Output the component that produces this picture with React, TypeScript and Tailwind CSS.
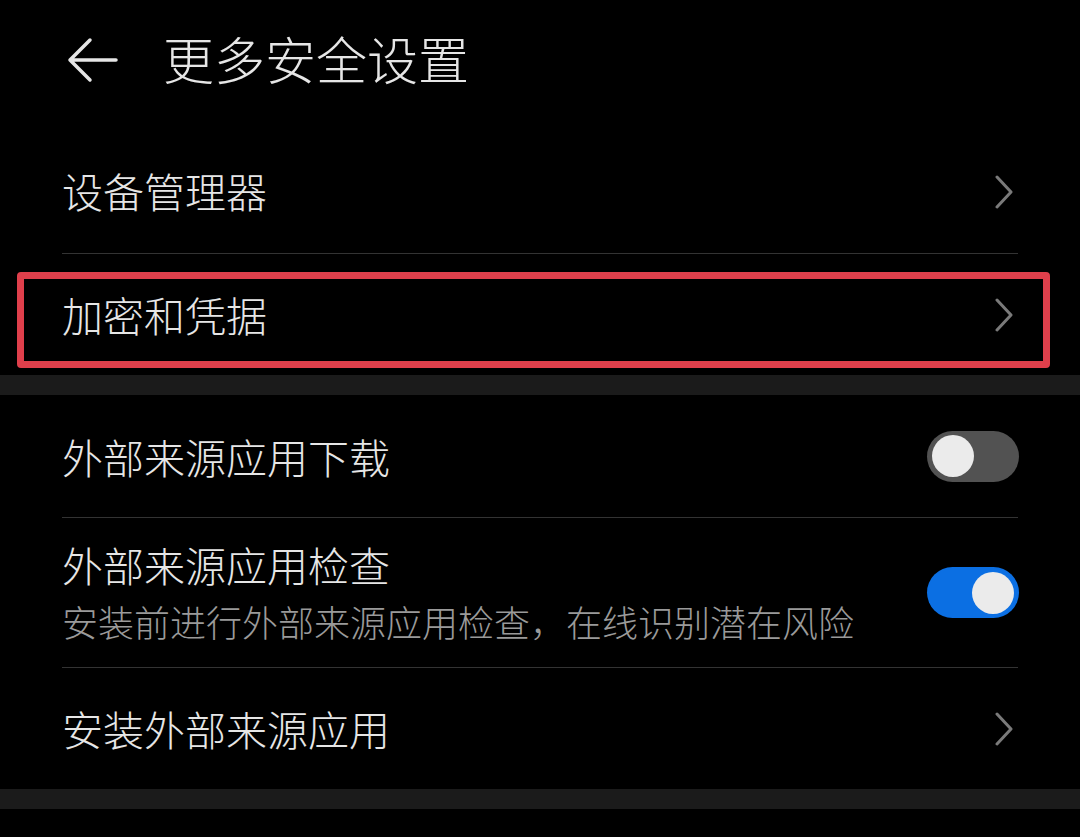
import React from "react";

const font = { fontFamily: '"Noto Sans CJK SC", "Noto Sans", sans-serif' };

function Chevron() {
  return (
    <svg width="20" height="34" viewBox="0 0 20 34" className="shrink-0">
      <path d="M3 2 L17 17 L3 32" fill="none" stroke="#7a7a7a" strokeWidth="3" strokeLinecap="round" strokeLinejoin="round" />
    </svg>
  );
}

function Toggle({ on }: { on: boolean }) {
  return (
    <div
      className={`w-[92px] h-[51px] rounded-full flex items-center px-[5px] shrink-0 ${
        on ? "bg-[#0b6fe3] justify-end" : "bg-[#525252] justify-start"
      }`}
    >
      <div className="w-[42px] h-[42px] rounded-full bg-[#ebebeb]" />
    </div>
  );
}

function Divider() {
  return <div className="mx-[62px] h-px bg-[#333333]" />;
}

function Band() {
  return <div className="h-[20px] bg-[#1b1b1b]" />;
}

export default function App() {
  return (
    <div className="w-[1080px] h-[837px] bg-black overflow-hidden text-[#e6e6e6] font-light" style={font}>
      {/* Header */}
      <div className="h-[131px] pb-[15px] flex items-center">
        <div className="w-[163px] pl-[66px] flex items-center pt-[4px]">
          <svg width="52" height="46" viewBox="0 0 52 46">
            <path d="M24 3 L4 23 L24 43 M4 23 L50 23" fill="none" stroke="#e6e6e6" strokeWidth="3.5" strokeLinecap="round" strokeLinejoin="round" />
          </svg>
        </div>
        <div className="text-[51px] leading-none">更多安全设置</div>
      </div>

      {/* Row 1 */}
      <div className="h-[122px] px-[62px] pr-[66px] flex items-center justify-between">
        <div className="text-[41px] leading-none pb-[4px]">设备管理器</div>
        <Chevron />
      </div>
      <Divider />

      {/* Row 2 */}
      <div className="relative h-[121px] px-[62px] pr-[66px] flex items-center justify-between">
        <div className="text-[41px] leading-none">加密和凭据</div>
        <Chevron />
        <div className="absolute left-[17px] top-[18px] w-[1033px] h-[96px] border-[7px] border-[#df3f4b] rounded-[4px] pointer-events-none" />
      </div>
      <Band />

      {/* Row 3 */}
      <div className="h-[122px] px-[62px] pr-[61px] flex items-center justify-between">
        <div className="text-[41px] leading-none">外部来源应用下载</div>
        <Toggle on={false} />
      </div>
      <Divider />

      {/* Row 4 */}
      <div className="h-[149px] px-[62px] pr-[61px] flex items-center justify-between">
        <div className="flex flex-col pb-[2px]">
          <div className="text-[41px] leading-none">外部来源应用检查</div>
          <div className="text-[36px] leading-none text-[#9a9a9a] mt-[18px]">安装前进行外部来源应用检查，在线识别潜在风险</div>
        </div>
        <Toggle on={true} />
      </div>
      <Divider />

      {/* Row 5 */}
      <div className="h-[121px] px-[62px] pr-[66px] flex items-center justify-between">
        <div className="text-[41px] leading-none">安装外部来源应用</div>
        <Chevron />
      </div>
      <Band />
    </div>
  );
}
